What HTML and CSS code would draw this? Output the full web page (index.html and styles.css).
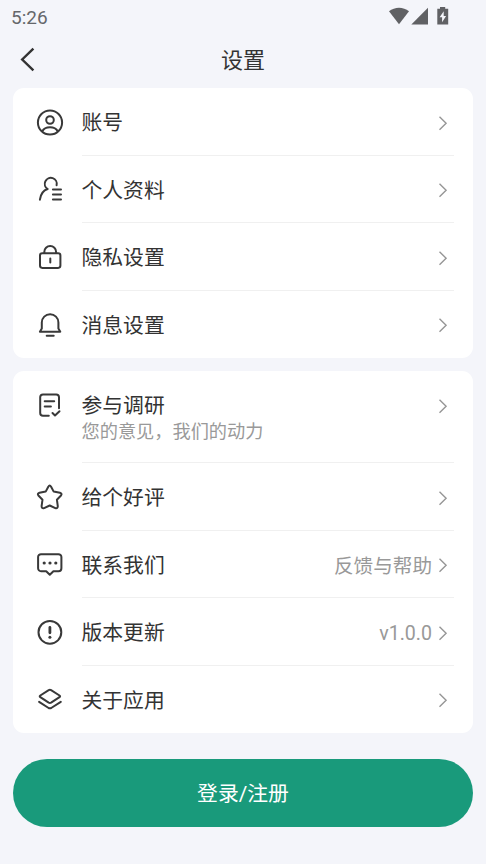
FILE: index.html
```html
<!DOCTYPE html>
<html lang="zh-CN">
<head>
<meta charset="utf-8">
<meta name="viewport" content="width=device-width, initial-scale=1">
<title>设置</title>
<link rel="stylesheet" href="styles.css">
</head>
<body>
<svg class="defs" width="0" height="0" aria-hidden="true">
  <symbol id="chevron" viewBox="0 0 10 16"><path d="M1.5 1.7 8.1 8.2 1.5 14.7"/></symbol>
</svg>
<div class="status">
  <span class="time">5:26</span>
  <svg class="status-icons" viewBox="0 0 60 20" width="60" height="20">
    <path d="M0 4.2C5.8-.5 14.2-.5 20 4.2L10 17.2Z"/>
    <path d="M39 .8V17.5H22.3Z"/>
    <path d="M51 0h5.200v1.700h3v15.800H48.300V1.700H51Z"/>
    <path class="bolt" d="M54.700 4.200 50.600 10.300h2.500v4.900l4-6.100h-2.400Z"/>
  </svg>
</div>
<header class="nav">
  <svg class="back" viewBox="0 0 16 26" width="16" height="26"><path d="M13.400 1.700 2.200 12.500 13.400 23.300"/></svg>
  <h1>设置</h1>
</header>
<main>
  <section class="card">
    <div class="row">
      <svg class="icon" viewBox="0 0 28 28"><circle cx="14" cy="14.500" r="12.100"/><circle cx="14" cy="12" r="3.800"/><path d="M6.300 23.200C7.800 20.300 10.500 19.200 14 19.200s6.200 1.100 7.700 4"/></svg>
      <div class="body"><span class="label">账号</span><svg class="chevron"><use href="#chevron"/></svg></div>
    </div>
    <div class="row">
      <svg class="icon" viewBox="0 0 28 28"><path d="M20.600 10.200A6 6 0 1 0 11.700 14C7.500 15.300 4.600 19.300 3.900 24.700M16.900 14.600h8.100M16.900 19.600h8.100M16.900 24.500h8.100"/></svg>
      <div class="body"><span class="label">个人资料</span><svg class="chevron"><use href="#chevron"/></svg></div>
    </div>
    <div class="row">
      <svg class="icon" viewBox="0 0 28 28"><rect x="4" y="10.200" width="20.400" height="14.700" rx="2.300"/><path d="M8.300 10V9a5.900 5.900 0 0 1 11.800 0v1M14.300 15.400v4"/></svg>
      <div class="body"><span class="label">隐私设置</span><svg class="chevron"><use href="#chevron"/></svg></div>
    </div>
    <div class="row">
      <svg class="icon" viewBox="0 0 28 28"><path d="M5.800 18.500V12.500a8.300 8.300 0 0 1 16.600 0v6L24.300 21.700H3.900ZM10.700 25.700h7"/></svg>
      <div class="body"><span class="label">消息设置</span><svg class="chevron"><use href="#chevron"/></svg></div>
    </div>
  </section>
  <section class="card">
    <div class="row row-tall">
      <svg class="icon" viewBox="0 0 28 28"><path d="M12.800 24.700H7a2.800 2.800 0 0 1-2.800-2.800V6.300A2.800 2.800 0 0 1 7 3.500h13.200A2.800 2.800 0 0 1 23 6.300v11M8.700 10.300h9.500M8.700 15.400h6.200M16.500 22l2.500 2.500 4.500-4.300"/></svg>
      <div class="body"><span class="label">参与调研<small>您的意见，我们的动力</small></span><svg class="chevron"><use href="#chevron"/></svg></div>
    </div>
    <div class="row">
      <svg class="icon" viewBox="0 0 28 28"><path d="M12.300 3.700Q13.700 1.500 15.100 3.700L17.700 8.600 23.900 9.800Q26.500 10.500 25 12.500L20.900 16.700 21.800 23.200Q21.700 26 19.300 25.100L13.700 22.500 8.100 25.100Q5.700 26 5.600 23.200L6.500 16.700 2.400 12.500Q.9 10.500 3.500 9.800L9.700 8.600Z"/></svg>
      <div class="body"><span class="label">给个好评</span><svg class="chevron"><use href="#chevron"/></svg></div>
    </div>
    <div class="row">
      <svg class="icon" viewBox="0 0 28 28"><path d="M5 4.200h17.500a2.900 2.900 0 0 1 2.900 2.900v11.200a2.900 2.900 0 0 1-2.900 2.900H17.400L13.800 24.700 10.200 21.200H5a2.900 2.900 0 0 1-2.900-2.900v-11.200A2.900 2.900 0 0 1 5 4.200Z"/><g class="dots"><circle cx="8.200" cy="13" r="1.600"/><circle cx="14" cy="13" r="1.600"/><circle cx="19.800" cy="13" r="1.600"/></g></svg>
      <div class="body"><span class="label">联系我们</span><span class="value">反馈与帮助</span><svg class="chevron"><use href="#chevron"/></svg></div>
    </div>
    <div class="row">
      <svg class="icon" viewBox="0 0 28 28"><circle cx="13.900" cy="14.300" r="11.400"/><path class="mark" d="M13.900 9.400v5.400"/><circle class="dot" cx="13.900" cy="19.200" r="1.500"/></svg>
      <div class="body"><span class="label">版本更新</span><span class="value">v1.0.0</span><svg class="chevron"><use href="#chevron"/></svg></div>
    </div>
    <div class="row">
      <svg class="icon" viewBox="0 0 28 28"><path d="M12.700 5.200Q13.900 4.500 15.100 5.200L23.500 10.500Q24.700 11.300 23.500 12.100L15.100 17.700Q13.900 18.400 12.700 17.700L4.300 12.100Q3.100 11.300 4.300 10.500ZM3.100 16.900 12.600 23Q13.900 23.700 15.200 23L24.800 16.900"/></svg>
      <div class="body"><span class="label">关于应用</span><svg class="chevron"><use href="#chevron"/></svg></div>
    </div>
  </section>
  <button class="login" type="button">登录/注册</button>
</main>
</body>
</html>
```
FILE: styles.css
```css
* { box-sizing: border-box; }

body {
  margin: 0;
  height: 864px;
  overflow: hidden;
  background: #f4f5fa;
  color: #333;
  font-family: Roboto, "Noto Sans CJK SC", sans-serif;
}

.defs { display: block; height: 0; }

.status {
  display: flex;
  justify-content: space-between;
  height: 34px;
  padding: 7px 37px 0 11px;
}

.time {
  font-size: 19px;
  line-height: 21px;
  color: #65676b;
}

.status-icons { fill: #606164; }
.status-icons .bolt { fill: #f4f5fa; }

.nav {
  display: grid;
  grid-template-columns: 60px 1fr 60px;
  align-items: center;
  height: 54px;
  padding-bottom: 3px;
}

.back {
  margin-left: 20px;
  fill: none;
  stroke: #333;
  stroke-width: 2.4;
}

.nav h1 {
  margin: 0;
  padding-top: 2px;
  text-align: center;
  font-size: 22px;
  font-weight: 400;
  line-height: 32px;
}

main {
  display: flex;
  flex-direction: column;
  gap: 13px;
  padding: 0 13px;
}

.card {
  background: #fff;
  border-radius: 11px;
}

.row {
  display: flex;
  align-items: center;
  height: 67.5px;
  padding: 0 19px 0 23px;
}

.icon {
  flex: none;
  width: 28px;
  height: 28px;
  margin-right: 17.5px;
  fill: none;
  stroke: #393939;
  stroke-width: 2;
  stroke-linecap: round;
  stroke-linejoin: round;
}

.icon .dots,
.icon .dot { fill: #393939; stroke: none; }
.icon .mark { stroke-width: 2.8; }

.body {
  flex: 1;
  display: flex;
  align-items: center;
  align-self: stretch;
  padding-right: 6px;
  border-bottom: 1px solid #f0f0f0;
}

.row:last-child .body { border-bottom-color: transparent; }

.label {
  flex: 1;
  padding-top: 4px;
  font-size: 20.8px;
  line-height: 30px;
}

.label small {
  display: block;
  font-size: 18.2px;
  line-height: 22px;
  color: #999;
}

.value {
  margin-right: 6px;
  padding-top: 6px;
  font-size: 19.6px;
  line-height: 28px;
  color: #999;
}

.chevron {
  flex: none;
  width: 10px;
  height: 16px;
  margin-top: 3px;
  fill: none;
  stroke: #969696;
  stroke-width: 1.4;
}

.row-tall {
  height: 92px;
  align-items: flex-start;
}

.row-tall .icon { margin-top: 20px; }

.row-tall .body {
  align-items: flex-start;
  padding-top: 20px;
}

.row-tall .label { padding-top: 0; }
.row-tall .chevron { margin-top: 7px; }

.login {
  height: 68px;
  margin-top: 13px;
  padding: 0 0 2px;
  border: 0;
  border-radius: 34px;
  background: #199a7b;
  color: #fff;
  font-family: inherit;
  font-size: 20.8px;
}
```
